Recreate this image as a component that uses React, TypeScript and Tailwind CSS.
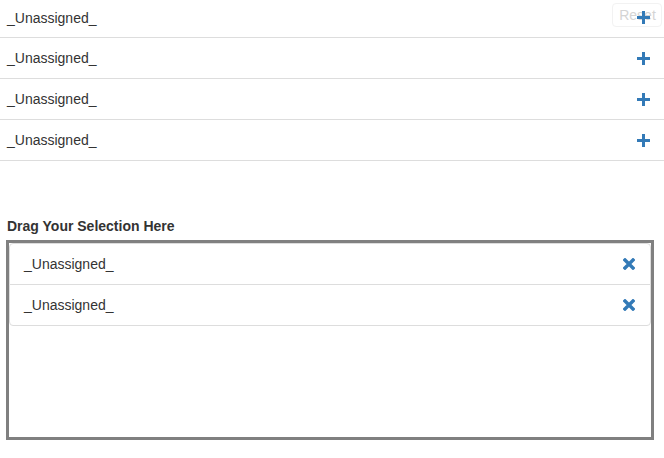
const font = { fontFamily: '"Liberation Sans", Arial, sans-serif' };

function PlusIcon() {
  return (
    <svg className="relative h-[13px] w-[13px]" viewBox="0 0 13 13" fill="#337ab7">
      <rect x="0" y="5" width="13" height="3" />
      <rect x="5" y="0" width="3" height="13" />
    </svg>
  );
}

function RemoveIcon() {
  return (
    <svg className="h-[12px] w-[12px]" viewBox="0 0 12 12" stroke="#337ab7" strokeWidth="3.4" strokeLinecap="square">
      <path d="M2 2L10 10M10 2L2 10" />
    </svg>
  );
}

const available = ['_Unassigned_', '_Unassigned_', '_Unassigned_', '_Unassigned_'];
const selected = ['_Unassigned_', '_Unassigned_'];

export default function App() {
  return (
    <div className="relative min-h-[458px] bg-white text-[14px] leading-[20px] text-[#333]" style={font}>
      {/* faded reset button */}
      <button className="absolute left-[612px] top-[3px] h-[24px] w-[50px] rounded border border-[#f2f2f2] pl-[1px] text-[#d4d4d4]">
        Reset
      </button>

      {/* available items */}
      <div>
        {available.map((name, i) => (
          <div
            key={i}
            className={`flex items-center justify-between border-b border-[#ddd] pl-[7px] pr-[14px] ${i === 0 ? 'h-[38px] pb-[2px]' : 'h-[41px]'}`}
          >
            <span>{name}</span>
            <PlusIcon />
          </div>
        ))}
      </div>

      <div className="mt-[55px] pl-[7px] font-bold">Drag Your Selection Here</div>

      {/* drop zone */}
      <div className="ml-[6px] mt-[4px] h-[200px] w-[648px] border-[3px] border-[#808080]">
        <div>
          {selected.map((name, i) => (
            <div
              key={i}
              className={`flex h-[42px] items-center justify-between border border-[#ddd] pl-[14px] pr-[15px] ${i === 0 ? 'rounded-t' : '-mt-px rounded-b'}`}
            >
              <span>{name}</span>
              <RemoveIcon />
            </div>
          ))}
        </div>
      </div>
    </div>
  );
}
